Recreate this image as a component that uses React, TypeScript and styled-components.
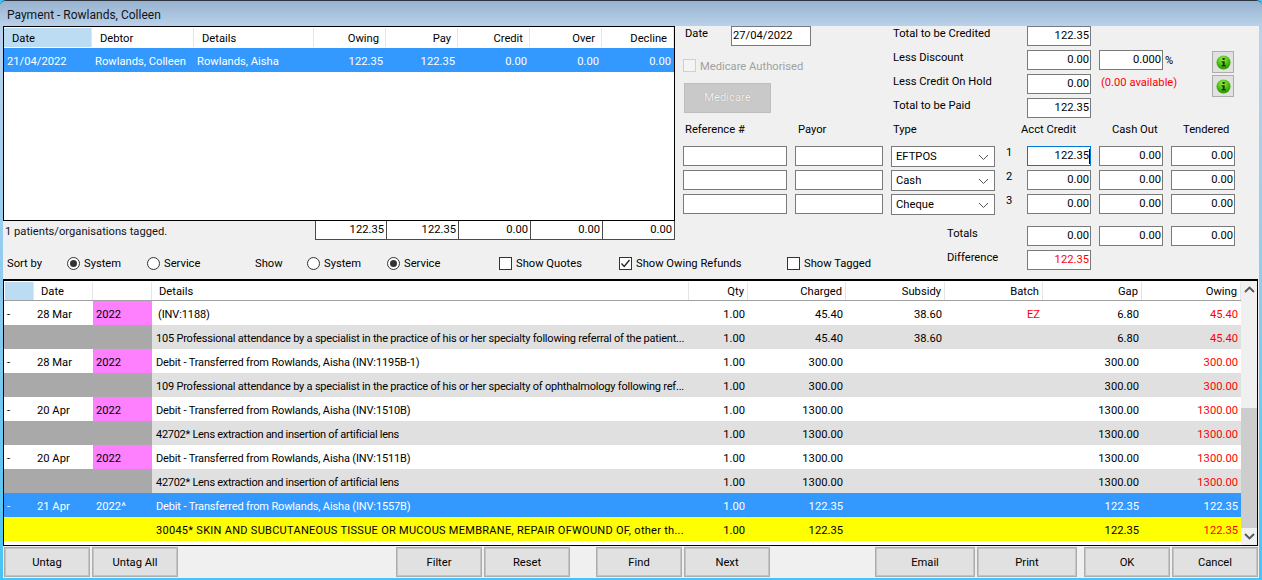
import React, { ReactElement } from 'react';
import styled, { createGlobalStyle } from 'styled-components';

const GlobalStyle = createGlobalStyle`
  html, body {
    margin: 0;
    padding: 0;
    background: #45c4f5;
  }
  * {
    box-sizing: border-box;
  }
`;

const Window = styled.div`
  width: 1262px;
  height: 580px;
  overflow: hidden;
  display: flex;
  flex-direction: column;
  padding: 0 3px 2px 3px;
  border-top: 1px solid #2b3440;
  border-radius: 6px 6px 0 0;
  background: linear-gradient(#9ab4d0 0, #b9d2ec 30px, #8ccbee 300px, #45c4f5 100%);
  font-family: 'Roboto', 'Liberation Sans', sans-serif;
  font-size: 11.2px;
  line-height: 16px;
  color: #000;
`;

const TitleBar = styled.div`
  height: 25px;
  flex: none;
  display: flex;
  align-items: center;
  padding: 2px 0 0 7px;
  margin: 0 -3px;
  background: linear-gradient(#98b3cf, #b9d1ea);
  color: #10141a;
  font-size: 12px;
`;

const Content = styled.div`
  flex: 1;
  display: flex;
  flex-direction: column;
  background: #f0f0f0;
  width: 1256px;
`;

const TopGrid = styled.div`
  display: grid;
  grid-template-columns: 672px 104px 88px 104px 16px 64px 64px 64px;
  grid-template-rows: repeat(8, 20px) 4px 20px 20px;
  column-gap: 8px;
  row-gap: 4px;
`;

const LeftPanel = styled.div`
  grid-column: 1;
  grid-row: 1 / 11;
  display: flex;
  flex-direction: column;
`;

const PaymentList = styled.div`
  height: 195px;
  border: 1px solid #000;
  background: #fff;
  padding-top: 1px;
`;

const PAYMENT_COLUMNS = '88px 102px 120px 72px 72px 72px 72px 72px';

const PaymentHeader = styled.div`
  display: grid;
  grid-template-columns: ${PAYMENT_COLUMNS};
  height: 20px;
`;

const PaymentHeadCell = styled.div<{ $right?: boolean; $active?: boolean }>`
  display: flex;
  align-items: center;
  height: 19px;
  justify-content: ${(p) => (p.$right ? 'flex-end' : 'flex-start')};
  padding: ${(p) => (p.$right ? '2px 6px 0 0' : '2px 0 0 8px')};
  border-right: 1px solid #e5e5e5;
  background: ${(p) => (p.$active ? '#bcdcf4' : '#fff')};
`;

const PaymentRow = styled.div`
  display: grid;
  grid-template-columns: ${PAYMENT_COLUMNS};
  height: 24px;
  background: #3399ff;
  color: #fff;
`;

const PaymentCell = styled.div<{ $right?: boolean }>`
  display: flex;
  align-items: center;
  justify-content: ${(p) => (p.$right ? 'flex-end' : 'flex-start')};
  padding: ${(p) => (p.$right ? '3px 3px 0 0' : '3px 0 0 3px')};
`;

const TotalsRow = styled.div`
  display: flex;
  height: 19px;
`;

const TaggedText = styled.div`
  width: 312px;
  padding: 3px 0 0 2px;
  color: #10141a;
`;

const TotalBox = styled.div`
  width: 72px;
  height: 19px;
  background: #fff;
  border-right: 1px solid #4a4a4a;
  border-bottom: 1px solid #4a4a4a;
  text-align: right;
  padding: 1px 2px 0 0;
  &:nth-of-type(2) {
    border-left: 1px solid #4a4a4a;
  }
`;

const DateBlock = styled.div`
  grid-column: 2 / 4;
  grid-row: 1 / 5;
  display: flex;
  flex-direction: column;
  align-items: flex-start;
`;

const DateRow = styled.div`
  display: flex;
  width: 100%;
`;

const DateLabel = styled.div`
  width: 48px;
  padding-left: 2px;
`;

const MedicareCheck = styled.div`
  display: flex;
  align-items: center;
  gap: 4px;
  margin-top: 13px;
  height: 13px;
  padding-top: 2px;
  color: #a0a0a0;
`;

const DisabledBox = styled.span`
  width: 13px;
  height: 13px;
  margin-top: -2px;
  background: #f4f4f4;
  border: 1px solid #cfcfcf;
`;

const MedicareButton = styled.div`
  width: 87px;
  height: 30px;
  margin: 11px 0 0 1px;
  display: flex;
  align-items: center;
  justify-content: center;
  background: #c9c9c9;
  border: 1px solid #bdbdbd;
  color: #f2f2f2;
  text-shadow: 0 0 1px #8e8e8e;
`;

const Label = styled.div<{ $col: string; $row: number; $indent?: number }>`
  grid-column: ${(p) => p.$col};
  grid-row: ${(p) => p.$row};
  padding-left: ${(p) => p.$indent ?? 2}px;
  white-space: nowrap;
`;

const LineNumber = styled(Label)`
  line-height: 14px;
`;

const Field = styled.div<{ $col?: number; $row?: number; $align?: string; $red?: boolean; $focused?: boolean }>`
  ${(p) => (p.$col ? `grid-column: ${p.$col};` : '')}
  ${(p) => (p.$row ? `grid-row: ${p.$row};` : '')}
  width: 100%;
  height: 20px;
  position: relative;
  background: #fff;
  border: 1px solid ${(p) => (p.$focused ? '#0078d7' : '#7a7a7a')};
  color: ${(p) => (p.$red ? '#ff0000' : '#000')};
  text-align: ${(p) => p.$align ?? 'right'};
  padding: 1px ${(p) => (p.$align === 'left' ? 2 : 1)}px 0 1px;
`;

const Caret = styled.span`
  position: absolute;
  right: 0;
  top: 2px;
  width: 1px;
  height: 15px;
  background: #000;
`;

const DateField = styled(Field)`
  width: 80px;
`;

const Select = styled.div<{ $row: number }>`
  grid-column: 4;
  grid-row: ${(p) => p.$row};
  height: 21px;
  background: #fff;
  border: 1px solid #7a7a7a;
  display: flex;
  align-items: center;
  justify-content: space-between;
  padding: 1px 5px 0 4px;
`;

const Available = styled.div`
  grid-column: 7;
  grid-row: 3;
  color: #ff0000;
  padding: 1px 0 0 2px;
  white-space: nowrap;
`;

const IconCell = styled.div<{ $row: number }>`
  grid-column: 8;
  grid-row: ${(p) => p.$row};
  display: flex;
  align-items: flex-start;
  justify-content: flex-end;
  padding-right: 1px;
  position: relative;
`;

const Percent = styled.span`
  position: absolute;
  left: -6px;
  top: 3px;
`;

const InfoButton = styled.div`
  width: 22px;
  height: 22px;
  margin-top: 1px;
  display: flex;
  align-items: center;
  justify-content: center;
  background: #e1e1e1;
  border: 1px solid #adadad;
`;

const OptionsRow = styled.div`
  grid-column: 1 / 4;
  grid-row: 11;
  display: flex;
  align-items: center;
  height: 14px;
  margin-top: 6px;
`;

const OptionItem = styled.div<{ $width: number; $indent?: number }>`
  width: ${(p) => p.$width}px;
  flex: none;
  display: flex;
  align-items: center;
  gap: 4px;
  padding: 2px 0 0 ${(p) => p.$indent ?? 0}px;
`;

const Radio = styled.span<{ $on?: boolean }>`
  width: 13px;
  height: 13px;
  margin-top: -2px;
  border-radius: 50%;
  border: 1px solid #333;
  background: #fff;
  display: flex;
  align-items: center;
  justify-content: center;
  &::after {
    content: '';
    width: 7px;
    height: 7px;
    border-radius: 50%;
    background: ${(p) => (p.$on ? '#333' : 'transparent')};
  }
`;

const CheckBox = styled.span`
  width: 13px;
  height: 13px;
  margin-top: -2px;
  border: 1px solid #333;
  background: #fff;
  display: flex;
`;

const Ledger = styled.div`
  width: 1255px;
  height: 267px;
  margin-top: 9px;
  border: 1px solid #000;
  border-top-width: 2px;
  background: #fff;
  display: flex;
`;

const LedgerBody = styled.div`
  width: 1237px;
  flex: none;
`;

const LEDGER_COLUMNS = '30px 59px 59px 537px 59px 98px 99px 98px 99px 99px';

const LedgerHeader = styled.div`
  display: grid;
  grid-template-columns: ${LEDGER_COLUMNS};
  height: 20px;
  padding-top: 1px;
  border-bottom: 1px solid #a0a0a0;
`;

const LedgerHead = styled.div<{ $right?: boolean; $active?: boolean; $indent?: number }>`
  display: flex;
  align-items: center;
  justify-content: ${(p) => (p.$right ? 'flex-end' : 'flex-start')};
  padding: ${(p) => (p.$right ? '2px 3px 0 0' : `2px 0 0 ${p.$indent ?? 7}px`)};
  border-right: 1px solid #e5e5e5;
  background: ${(p) => (p.$active ? '#bcdcf4' : '#fff')};
  margin-left: ${(p) => (p.$active ? '1px' : '0')};
`;

type RowKind = 'plain' | 'sub' | 'selected' | 'yellow';

const rowBg: Record<RowKind, string> = {
  plain: '#fff',
  sub: '#e0e0e0',
  selected: '#3399ff',
  yellow: '#ffff00',
};

const LedgerRow = styled.div<{ $kind: RowKind }>`
  display: grid;
  grid-template-columns: ${LEDGER_COLUMNS};
  height: 24px;
  background: ${(p) => rowBg[p.$kind]};
  color: ${(p) => (p.$kind === 'selected' ? '#fff' : '#000')};
`;

const Cell = styled.div<{ $right?: boolean; $indent?: number; $red?: boolean; $bg?: string }>`
  display: flex;
  align-items: center;
  white-space: nowrap;
  overflow: hidden;
  justify-content: ${(p) => (p.$right ? 'flex-end' : 'flex-start')};
  padding: ${(p) => (p.$right ? '3px 3px 0 0' : `3px 0 0 ${p.$indent ?? 3}px`)};
  ${(p) => (p.$red ? 'color: #ff0000;' : '')}
  ${(p) => (p.$bg ? `background: ${p.$bg};` : '')}
`;

const DetailsCell = styled(Cell)<{ $tracking: number }>`
  font-size: 11px;
  letter-spacing: ${(p) => p.$tracking}px;
`;

const ScrollBar = styled.div`
  width: 16px;
  flex: none;
  display: flex;
  flex-direction: column;
  background: #f0f0f0;
`;

const ScrollArrow = styled.div`
  height: 17px;
  flex: none;
  display: flex;
  align-items: center;
  justify-content: center;
`;

const ScrollTrack = styled.div`
  flex: 1;
  display: flex;
  flex-direction: column;
  padding-top: 110px;
`;

const ScrollThumb = styled.div`
  flex: 1;
  background: #cdcdcd;
`;

const Toolbar = styled.div`
  display: flex;
  margin-top: 1px;
  padding-left: 1px;
`;

const ButtonGroup = styled.div<{ $offset?: number }>`
  display: flex;
  gap: 2px;
  margin-left: ${(p) => p.$offset ?? 0}px;
`;

const Button = styled.div<{ $wide?: boolean }>`
  width: ${(p) => (p.$wide ? 100 : 86)}px;
  height: 30px;
  display: flex;
  align-items: center;
  justify-content: center;
  padding-top: 2px;
  background: #e1e1e1;
  border: 1px solid #adadad;
  box-shadow: inset 0 0 0 1px #c4c4c4;
`;

const Chevron = ({ up, color = '#555' }: { up?: boolean; color?: string }): ReactElement => (
  <svg width="11" height="7" viewBox="0 0 11 7">
    <polyline
      points={up ? '1,6 5.5,1.5 10,6' : '1,1 5.5,5.5 10,1'}
      fill="none"
      stroke={color}
      strokeWidth={up === undefined ? 1 : 1.8}
    />
  </svg>
);

const InfoIcon = ({ id }: { id: string }): ReactElement => (
  <svg width="15" height="15" viewBox="0 0 15 15">
    <defs>
      <radialGradient id={id} cx="45%" cy="30%" r="75%">
        <stop offset="0" stopColor="#a4ea52" />
        <stop offset="0.55" stopColor="#49bf0e" />
        <stop offset="1" stopColor="#2a8a06" />
      </radialGradient>
    </defs>
    <circle cx="7.5" cy="7.5" r="7" fill={`url(#${id})`} />
    <rect x="6.5" y="3" width="2.2" height="2" fill="#123c04" />
    <path d="M5.5 6.2h3.2v4h1.2v1.3H5.5v-1.3h1.2V7.5H5.5z" fill="#123c04" />
  </svg>
);

const TickMark = (): ReactElement => (
  <svg width="11" height="11" viewBox="0 0 11 11">
    <polyline points="1.5,5.5 4.2,8.5 9.5,2" fill="none" stroke="#222" strokeWidth="1.3" />
  </svg>
);

const paymentHeads = ['Date', 'Debtor', 'Details', 'Owing', 'Pay', 'Credit', 'Over', 'Decline'];
const paymentValues = ['122.35', '122.35', '0.00', '0.00', '0.00'];
const paymentTotals = ['122.35', '122.35', '0.00', '0.00', '0.00'];

const paymentLines = [
  { type: 'EFTPOS', values: ['122.35', '0.00', '0.00'] },
  { type: 'Cash', values: ['0.00', '0.00', '0.00'] },
  { type: 'Cheque', values: ['0.00', '0.00', '0.00'] },
];

const ledgerHeads = ['Qty', 'Charged', 'Subsidy', 'Batch', 'Gap', 'Owing'];

type LedgerLine = {
  kind: RowKind;
  date?: string;
  year?: string;
  details: string;
  indent?: number;
  tracking: number;
  charged: string;
  subsidy?: string;
  batch?: string;
  gap: string;
};

const PINK = '#ff80ff';
const GREY = '#a9a9a9';

const ledgerLines: LedgerLine[] = [
  { kind: 'plain', date: '28 Mar', year: '2022', details: '(INV:1188)', indent: 6, tracking: -0.1, charged: '45.40', subsidy: '38.60', batch: 'EZ', gap: '6.80' },
  { kind: 'sub', details: '105 Professional attendance by a specialist in the practice of his or her specialty following referral of the patient...', tracking: -0.21, charged: '45.40', subsidy: '38.60', gap: '6.80' },
  { kind: 'plain', date: '28 Mar', year: '2022', details: 'Debit - Transferred from Rowlands, Aisha (INV:1195B-1)', tracking: -0.14, charged: '300.00', gap: '300.00' },
  { kind: 'sub', details: '109 Professional attendance by a specialist in the practice of his or her specialty of ophthalmology following ref...', tracking: -0.21, charged: '300.00', gap: '300.00' },
  { kind: 'plain', date: '20 Apr', year: '2022', details: 'Debit - Transferred from Rowlands, Aisha (INV:1510B)', tracking: -0.14, charged: '1300.00', gap: '1300.00' },
  { kind: 'sub', details: '42702* Lens extraction and insertion of artificial lens', tracking: -0.28, charged: '1300.00', gap: '1300.00' },
  { kind: 'plain', date: '20 Apr', year: '2022', details: 'Debit - Transferred from Rowlands, Aisha (INV:1511B)', tracking: -0.14, charged: '1300.00', gap: '1300.00' },
  { kind: 'sub', details: '42702* Lens extraction and insertion of artificial lens', tracking: -0.28, charged: '1300.00', gap: '1300.00' },
  { kind: 'selected', date: '21 Apr', year: '2022^', details: 'Debit - Transferred from Rowlands, Aisha (INV:1557B)', tracking: -0.14, charged: '122.35', gap: '122.35' },
  { kind: 'yellow', details: '30045* SKIN AND SUBCUTANEOUS TISSUE OR MUCOUS MEMBRANE, REPAIR OFWOUND OF, other th...', tracking: 0.28, charged: '122.35', gap: '122.35' },
];

const App = (): ReactElement => (
  <>
    <GlobalStyle />
    <Window>
      <TitleBar>Payment - Rowlands, Colleen</TitleBar>
      <Content>
        <TopGrid>
          <LeftPanel>
            <PaymentList>
              <PaymentHeader>
                {paymentHeads.map((head, i) => (
                  <PaymentHeadCell key={head} $right={i > 2} $active={i === 0}>
                    {head}
                  </PaymentHeadCell>
                ))}
              </PaymentHeader>
              <PaymentRow>
                <PaymentCell>21/04/2022</PaymentCell>
                <PaymentCell>Rowlands, Colleen</PaymentCell>
                <PaymentCell>Rowlands, Aisha</PaymentCell>
                {paymentValues.map((value, i) => (
                  <PaymentCell key={i} $right>
                    {value}
                  </PaymentCell>
                ))}
              </PaymentRow>
            </PaymentList>
            <TotalsRow>
              <TaggedText>1 patients/organisations tagged.</TaggedText>
              {paymentTotals.map((value, i) => (
                <TotalBox key={i}>{value}</TotalBox>
              ))}
            </TotalsRow>
          </LeftPanel>

          <DateBlock>
            <DateRow>
              <DateLabel>Date</DateLabel>
              <DateField $align="left">27/04/2022</DateField>
            </DateRow>
            <MedicareCheck>
              <DisabledBox />
              Medicare Authorised
            </MedicareCheck>
            <MedicareButton>Medicare</MedicareButton>
          </DateBlock>

          <Label $col="4 / 6" $row={1}>Total to be Credited</Label>
          <Label $col="4 / 6" $row={2}>Less Discount</Label>
          <Label $col="4 / 6" $row={3}>Less Credit On Hold</Label>
          <Label $col="4 / 6" $row={4}>Total to be Paid</Label>
          <Field $col={6} $row={1}>122.35</Field>
          <Field $col={6} $row={2}>0.00</Field>
          <Field $col={7} $row={2}>0.000</Field>
          <Field $col={6} $row={3}>0.00</Field>
          <Available>(0.00 available)</Available>
          <Field $col={6} $row={4}>122.35</Field>
          <IconCell $row={2}>
            <Percent>%</Percent>
            <InfoButton>
              <InfoIcon id="info-a" />
            </InfoButton>
          </IconCell>
          <IconCell $row={3}>
            <InfoButton>
              <InfoIcon id="info-b" />
            </InfoButton>
          </IconCell>

          <Label $col="2" $row={5}>Reference #</Label>
          <Label $col="3" $row={5} $indent={3}>Payor</Label>
          <Label $col="4" $row={5}>Type</Label>
          <Label $col="5 / 7" $row={5} $indent={18}>Acct Credit</Label>
          <Label $col="7" $row={5} $indent={13}>Cash Out</Label>
          <Label $col="8" $row={5} $indent={12}>Tendered</Label>

          {paymentLines.map((line, i) => (
            <React.Fragment key={line.type}>
              <Field $col={2} $row={6 + i} />
              <Field $col={3} $row={6 + i} />
              <Select $row={6 + i}>
                {line.type}
                <Chevron />
              </Select>
              <LineNumber $col="5" $row={6 + i} $indent={3}>{i + 1}</LineNumber>
              <Field $col={6} $row={6 + i} $focused={i === 0}>
                {line.values[0]}
                {i === 0 && <Caret />}
              </Field>
              <Field $col={7} $row={6 + i}>{line.values[1]}</Field>
              <Field $col={8} $row={6 + i}>{line.values[2]}</Field>
            </React.Fragment>
          ))}

          <Label $col="4 / 6" $row={10} $indent={56}>Totals</Label>
          <Field $col={6} $row={10}>0.00</Field>
          <Field $col={7} $row={10}>0.00</Field>
          <Field $col={8} $row={10}>0.00</Field>
          <Label $col="4 / 6" $row={11} $indent={56}>Difference</Label>
          <Field $col={6} $row={11} $red>122.35</Field>

          <OptionsRow>
            <OptionItem $width={64} $indent={4}>Sort by</OptionItem>
            <OptionItem $width={80}><Radio $on />System</OptionItem>
            <OptionItem $width={108}><Radio />Service</OptionItem>
            <OptionItem $width={52}>Show</OptionItem>
            <OptionItem $width={80}><Radio />System</OptionItem>
            <OptionItem $width={112}><Radio $on />Service</OptionItem>
            <OptionItem $width={120}><CheckBox />Show Quotes</OptionItem>
            <OptionItem $width={168}><CheckBox><TickMark /></CheckBox>Show Owing Refunds</OptionItem>
            <OptionItem $width={96}><CheckBox />Show Tagged</OptionItem>
          </OptionsRow>
        </TopGrid>

        <Ledger>
          <LedgerBody>
            <LedgerHeader>
              <LedgerHead $active />
              <LedgerHead>Date</LedgerHead>
              <LedgerHead />
              <LedgerHead>Details</LedgerHead>
              {ledgerHeads.map((head) => (
                <LedgerHead key={head} $right>
                  {head}
                </LedgerHead>
              ))}
            </LedgerHeader>
            {ledgerLines.map((line, i) => {
              const sub = line.kind === 'sub';
              const selected = line.kind === 'selected';
              const yearBg = line.kind === 'plain' ? PINK : sub ? GREY : undefined;
              return (
                <LedgerRow key={i} $kind={line.kind}>
                  <Cell $bg={sub ? GREY : undefined}>{line.date ? '-' : ''}</Cell>
                  <Cell $bg={sub ? GREY : undefined}>{line.date}</Cell>
                  <Cell $bg={yearBg}>{line.year}</Cell>
                  <DetailsCell $indent={line.indent ?? 4} $tracking={line.tracking}>{line.details}</DetailsCell>
                  <Cell $right>1.00</Cell>
                  <Cell $right>{line.charged}</Cell>
                  <Cell $right>{line.subsidy}</Cell>
                  <Cell $right $red>{line.batch}</Cell>
                  <Cell $right>{line.gap}</Cell>
                  <Cell $right $red={!selected}>{line.charged}</Cell>
                </LedgerRow>
              );
            })}
          </LedgerBody>
          <ScrollBar>
            <ScrollArrow>
              <Chevron up />
            </ScrollArrow>
            <ScrollTrack>
              <ScrollThumb />
            </ScrollTrack>
            <ScrollArrow>
              <Chevron up={false} />
            </ScrollArrow>
          </ScrollBar>
        </Ledger>

        <Toolbar>
          <ButtonGroup>
            <Button>Untag</Button>
            <Button>Untag All</Button>
          </ButtonGroup>
          <ButtonGroup $offset={218}>
            <Button>Filter</Button>
            <Button>Reset</Button>
          </ButtonGroup>
          <ButtonGroup $offset={26}>
            <Button>Find</Button>
            <Button>Next</Button>
          </ButtonGroup>
          <ButtonGroup $offset={105}>
            <Button $wide>Email</Button>
            <Button $wide>Print</Button>
          </ButtonGroup>
          <ButtonGroup $offset={7}>
            <Button>OK</Button>
            <Button>Cancel</Button>
          </ButtonGroup>
        </Toolbar>
      </Content>
    </Window>
  </>
);

export default App;
